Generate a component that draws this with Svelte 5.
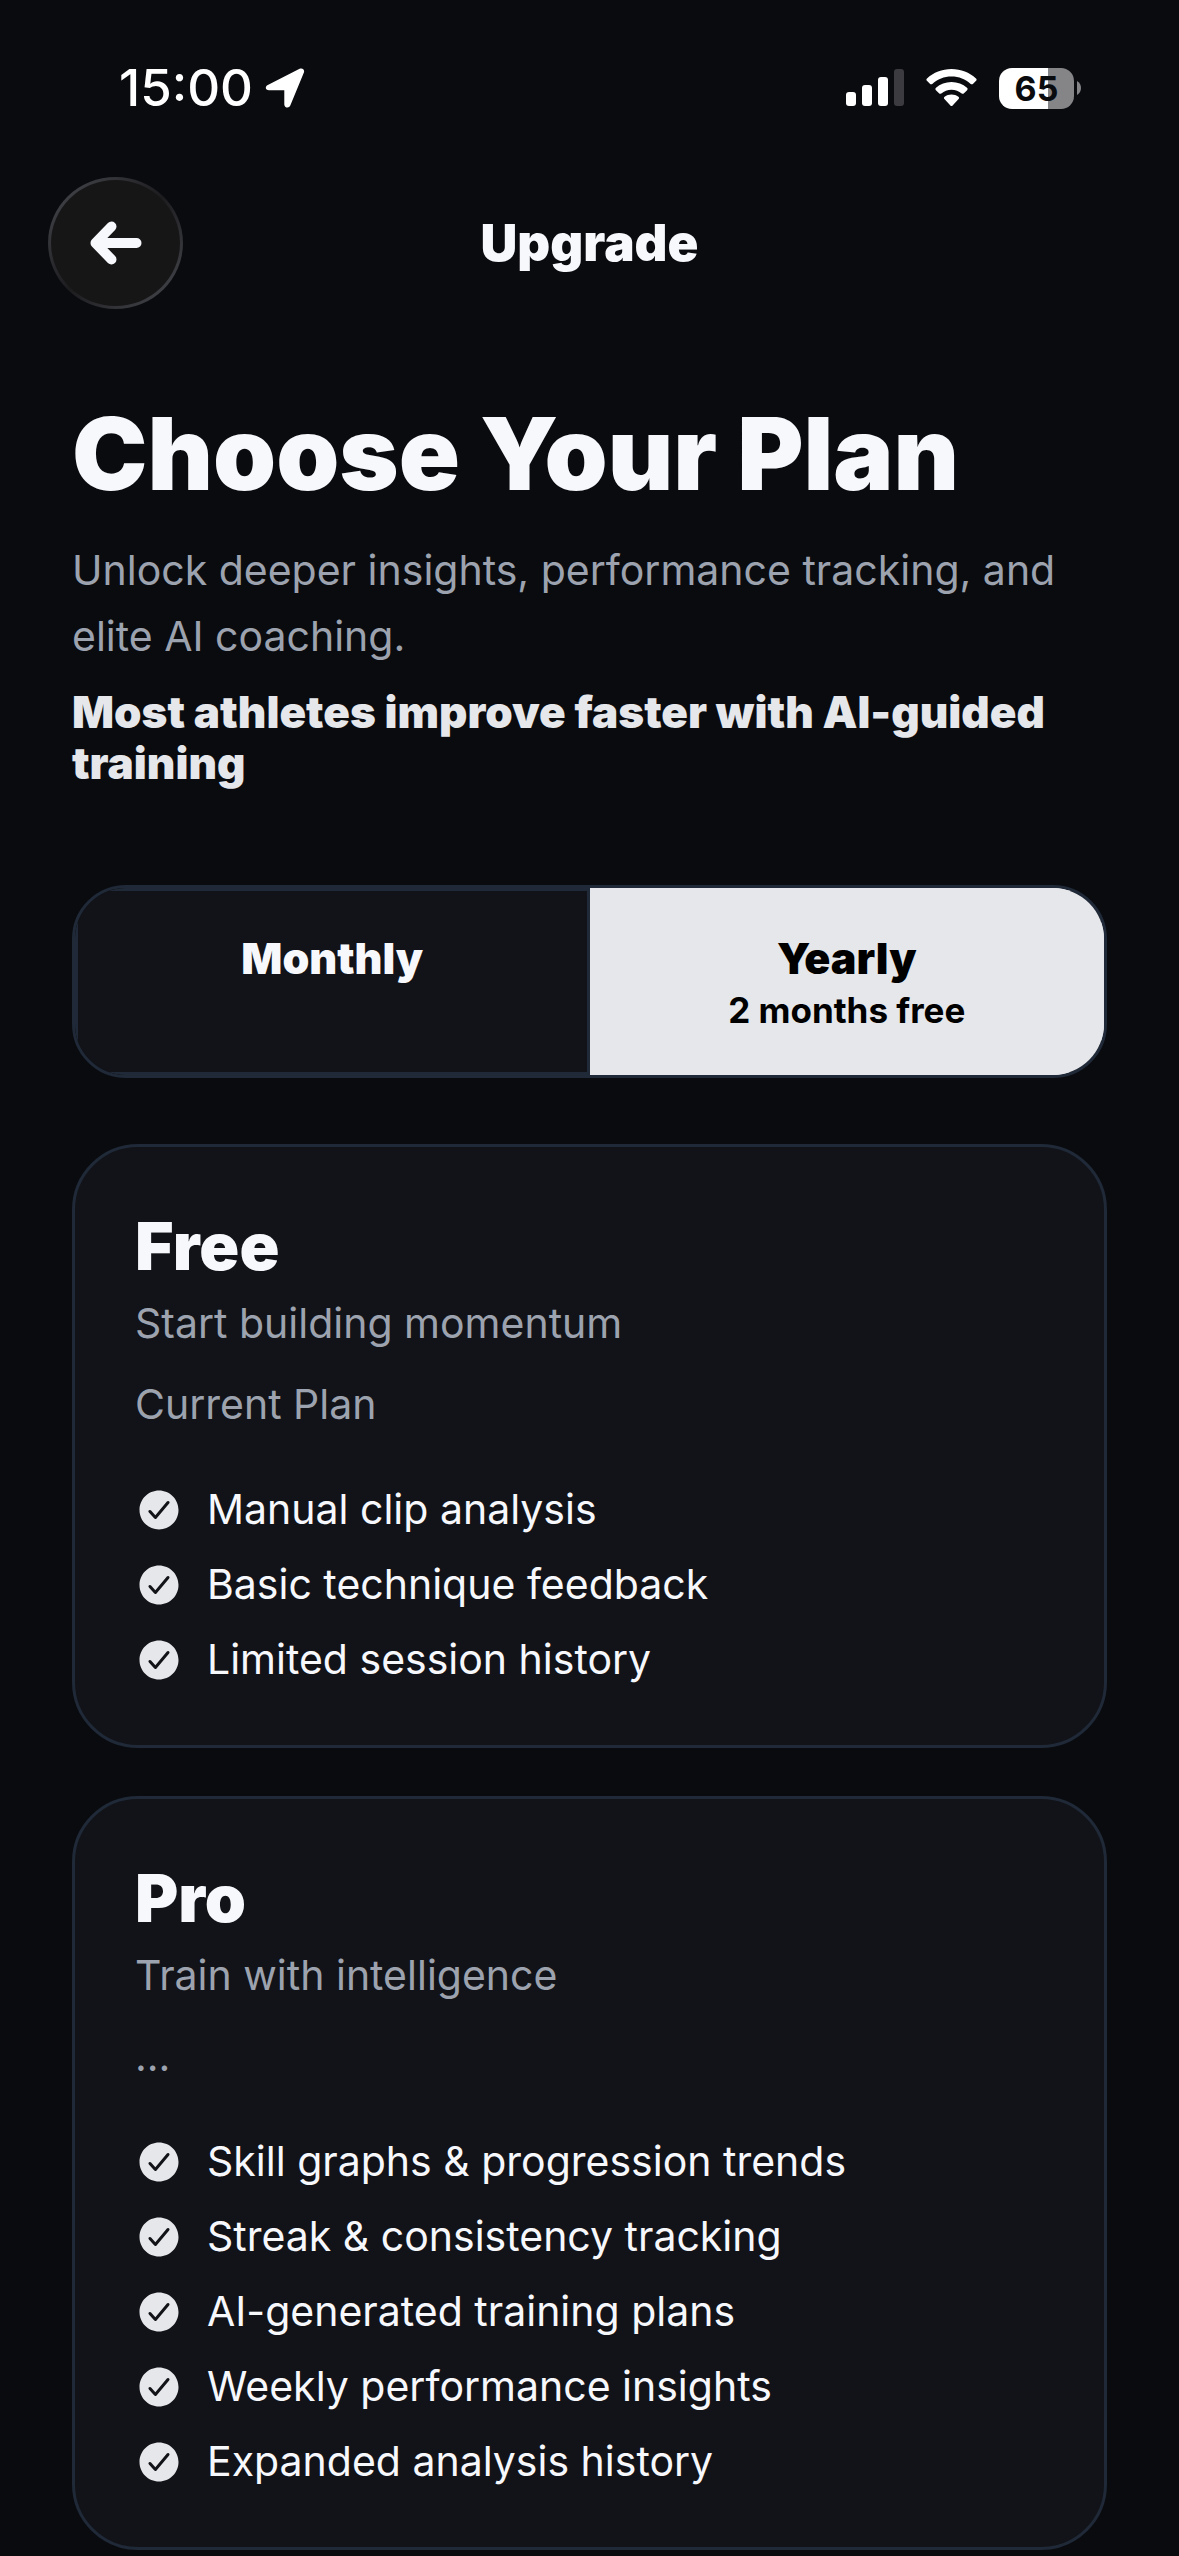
<script>
    let billing = $state('yearly');

    const plans = [
        {
            name: 'Free',
            tagline: 'Start building momentum',
            price: 'Current Plan',
            features: [
                'Manual clip analysis',
                'Basic technique feedback',
                'Limited session history'
            ]
        },
        {
            name: 'Pro',
            tagline: 'Train with intelligence',
            price: '...',
            features: [
                'Skill graphs & progression trends',
                'Streak & consistency tracking',
                'AI-generated training plans',
                'Weekly performance insights',
                'Expanded analysis history'
            ]
        }
    ];
</script>

<div class="screen">
    <div class="status-bar">
        <div class="status-left">
            <span class="time">15:00</span>
            <svg width="40" height="40" viewBox="0 0 40 40" aria-hidden="true">
                <path d="M2.800 17 34.600.800c2.800-1.300 5.300 1 4.300 3.800L25.300 37.600c-1.200 3-6 2.400-6-1.200V22.200H4C.4 22.200-.4 18.700 2.800 17Z" fill="#fff" />
            </svg>
        </div>
        <div class="status-right">
            <svg width="58" height="38" viewBox="0 0 58 38" aria-hidden="true">
                <rect x="0" y="23" width="10" height="14" rx="3" fill="#fff" />
                <rect x="16" y="16" width="10" height="21" rx="3" fill="#fff" />
                <rect x="32" y="8" width="10" height="29" rx="3" fill="#fff" />
                <rect x="48" y="0" width="10" height="37" rx="3" fill="#3b3b40" />
            </svg>
            <svg width="51" height="38" viewBox="0 0 51 38" fill="#fff" aria-hidden="true">
                <path d="M25.500 0C35 0 43.500 3.500 50 9.400c.8.700.8 1.700.1 2.400l-3 3c-.7.700-1.600.7-2.400.1C39.500 10.300 33 7.600 25.500 7.600S11.500 10.300 6.300 14.900c-.8.600-1.700.6-2.400-.1l-3-3c-.7-.7-.7-1.700.1-2.400C7.500 3.500 16 0 25.500 0Z" />
                <path d="M25.500 13c6 0 11.300 2.200 15.500 5.800.8.700.8 1.700.1 2.400l-3.100 3.100c-.7.700-1.500.7-2.300.1-2.800-2.300-6.300-3.700-10.200-3.700s-7.400 1.400-10.200 3.700c-.8.600-1.600.6-2.300-.1l-3.100-3.100c-.7-.7-.7-1.700.1-2.400C14.200 15.200 19.500 13 25.500 13Z" />
                <path d="M25.500 25.600c2.600 0 4.900.8 6.900 2.200.8.600.9 1.600.2 2.300l-6 6.300c-.6.700-1.600.7-2.200 0l-6-6.300c-.7-.7-.6-1.700.2-2.300 2-1.400 4.300-2.200 6.900-2.200Z" />
            </svg>
            <div class="battery-wrap">
                <div class="battery">65</div>
                <svg width="4" height="14" viewBox="0 0 4 14" aria-hidden="true">
                    <path d="M0 0C2.400 1.200 4 4 4 7S2.400 12.800 0 14Z" fill="#858588" />
                </svg>
            </div>
        </div>
    </div>

    <header class="nav">
        <button class="back" type="button" aria-label="Back">
            <svg width="52" height="44" viewBox="0 0 52 44" aria-hidden="true">
                <path d="M21.500 5.500 5.500 22l16 16.500M7 22h39.500" />
            </svg>
        </button>
        <div class="nav-title">Upgrade</div>
    </header>

    <main>
        <h1>Choose Your Plan</h1>
        <p class="subtitle">Unlock deeper insights, performance tracking, and elite AI coaching.</p>
        <p class="highlight">Most athletes improve faster with AI-guided training</p>

        <div class="toggle" role="group" aria-label="Billing period">
            <button
                type="button"
                class:active={billing === 'monthly'}
                aria-pressed={billing === 'monthly'}
                onclick={() => (billing = 'monthly')}
            >
                <span class="period">Monthly</span>
            </button>
            <button
                type="button"
                class:active={billing === 'yearly'}
                aria-pressed={billing === 'yearly'}
                onclick={() => (billing = 'yearly')}
            >
                <span class="period">Yearly</span>
                <span class="saving">2 months free</span>
            </button>
        </div>

        <div class="plans">
            {#each plans as plan}
                <section class="card">
                    <h2>{plan.name}</h2>
                    <p class="tagline">{plan.tagline}</p>
                    <p class="price">{plan.price}</p>
                    <ul>
                        {#each plan.features as feature}
                            <li>
                                <svg width="48" height="48" viewBox="0 0 512 512" aria-hidden="true">
                                    <path fill="#e5e7eb" d="M256 48C141.310 48 48 141.310 48 256s93.310 208 208 208 208-93.310 208-208S370.690 48 256 48Zm108.250 138.290-134.400 160a16 16 0 0 1-12 5.710h-.27a16 16 0 0 1-11.890-5.300l-57.600-64a16 16 0 1 1 23.780-21.400l45.290 50.320 122.590-145.910a16 16 0 0 1 24.500 20.580Z" />
                                </svg>
                                <span>{feature}</span>
                            </li>
                        {/each}
                    </ul>
                </section>
            {/each}
        </div>
    </main>
</div>

<style>
    :global(body) {
        margin: 0;
        background: #0a0b0f;
    }

    .screen {
        font-family: Inter, "Liberation Sans", sans-serif;
        color: #f7f8fc;
        background: #0a0b0f;
    }

    h1, h2, p, ul {
        margin: 0;
        padding: 0;
    }

    button {
        font: inherit;
        color: inherit;
        cursor: pointer;
    }

    svg {
        display: block;
        flex: none;
    }

    /* status bar */
    .status-bar {
        display: flex;
        justify-content: space-between;
        padding: 64px 98px 65px 119px;
    }

    .status-left, .status-right, .battery-wrap {
        display: flex;
        align-items: center;
        height: 48px;
    }

    .status-left {
        gap: 12px;
    }

    .status-right {
        gap: 22px;
    }

    .time {
        font-size: 51px;
        line-height: 48px;
        font-weight: 500;
        color: #fff;
    }

    .battery-wrap {
        gap: 3px;
    }

    .battery {
        width: 75px;
        height: 41px;
        border-radius: 13px;
        background: linear-gradient(to right, #fff 65%, #858588 65%);
        color: #0a0b0f;
        font-size: 34px;
        line-height: 41px;
        font-weight: 700;
        text-align: center;
    }

    /* navigation */
    .nav {
        display: grid;
        grid-template-columns: 1fr auto 1fr;
        align-items: center;
        padding: 0 48px;
    }

    .back {
        display: flex;
        align-items: center;
        justify-content: center;
        width: 135px;
        height: 132px;
        padding: 0;
        border: 3px solid transparent;
        border-radius: 50%;
        background:
            linear-gradient(#161617, #161617) padding-box,
            linear-gradient(135deg, #3c3d42 15%, #1c1c1f 50%, #3c3d42 85%) border-box;
    }

    .back path {
        fill: none;
        stroke: #f7f8fc;
        stroke-width: 10;
        stroke-linecap: round;
        stroke-linejoin: round;
    }

    .nav-title {
        font-size: 51px;
        line-height: 60px;
        font-weight: 900;
    }

    main {
        padding: 84px 72px 0;
    }

    h1 {
        font-size: 101px;
        line-height: 120px;
        font-weight: 900;
    }

    .subtitle {
        margin-top: 24px;
        font-size: 41px;
        line-height: 66px;
        color: #9ca3af;
    }

    .highlight {
        margin-top: 18px;
        font-size: 44px;
        line-height: 51px;
        font-weight: 900;
        color: #e5e7eb;
    }

    /* billing switch */
    .toggle {
        display: flex;
        margin-top: 96px;
        border: 3px solid #1f2937;
        border-radius: 54px;
        overflow: hidden;
        background: #121318;
    }

    .toggle button {
        flex: 1;
        display: flex;
        flex-direction: column;
        align-items: center;
        gap: 6px;
        padding: 42px 0;
        border: 3px solid #1f2937;
        background: #121318;
    }

    .toggle button.active {
        border-color: #e5e7eb;
        background: #e5e7eb;
        color: #000;
    }

    .period {
        font-size: 43px;
        line-height: 51px;
        font-weight: 900;
    }

    .saving {
        font-size: 35px;
        line-height: 40px;
        font-weight: 700;
    }

    /* plan cards */
    .plans {
        display: flex;
        flex-direction: column;
        gap: 48px;
        margin-top: 66px;
    }

    .card {
        padding: 60px;
        border: 3px solid #1f2937;
        border-radius: 66px;
        background: #121318;
    }

    h2 {
        font-size: 66px;
        line-height: 78px;
        font-weight: 900;
    }

    .tagline, .price {
        font-size: 41px;
        line-height: 51px;
        color: #9ca3af;
    }

    .tagline {
        margin-top: 13px;
    }

    .price {
        margin-top: 30px;
    }

    ul {
        display: flex;
        flex-direction: column;
        gap: 24px;
        margin-top: 54px;
        list-style: none;
    }

    li {
        display: flex;
        align-items: center;
        gap: 24px;
        font-size: 41px;
        line-height: 51px;
    }
</style>
